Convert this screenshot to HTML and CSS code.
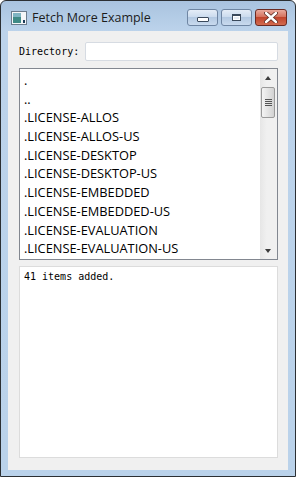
FILE: index.html
```html
<!DOCTYPE html>
<html lang="en">
<head>
  <meta charset="UTF-8" />
  <title>Fetch More Example</title>
  <link rel="stylesheet" href="styles.css">
</head>
<body>
  <div class="window">
    <div class="titlebar">
      <svg class="app-icon" width="16" height="14" viewBox="0 0 16 14">
        <rect x="0.5" y="0.5" width="15" height="13" fill="#f4f6f8" stroke="#6b7b8c"/>
        <rect x="2" y="2" width="8" height="10" fill="#3f8a86"/>
        <rect x="2" y="2" width="8" height="4" fill="#7fb4c2"/>
        <rect x="12" y="9" width="2" height="3" fill="#1d3b5a"/>
      </svg>
      <span class="title">Fetch More Example</span>
      <div class="caption-btns">
        <div class="cbtn"><span class="min-glyph"></span></div>
        <div class="cbtn"><span class="max-glyph"></span></div>
        <div class="cbtn close">
          <svg width="14" height="11" viewBox="0 0 14 11">
            <path d="M2 1 L12 10 M12 1 L2 10" stroke="#5a2a22" stroke-width="4" stroke-linecap="round"/>
            <path d="M2 1 L12 10 M12 1 L2 10" stroke="#fff" stroke-width="2.4" stroke-linecap="round"/>
          </svg>
        </div>
      </div>
    </div>
    <div class="client">
      <div class="dir-row">
        <label class="dir-label">Directory:</label>
        <div class="dir-input"></div>
      </div>
      <div class="listbox">
        <ul class="items">
          <li>.</li>
          <li>..</li>
          <li>.LICENSE-ALLOS</li>
          <li>.LICENSE-ALLOS-US</li>
          <li>.LICENSE-DESKTOP</li>
          <li>.LICENSE-DESKTOP-US</li>
          <li>.LICENSE-EMBEDDED</li>
          <li>.LICENSE-EMBEDDED-US</li>
          <li>.LICENSE-EVALUATION</li>
          <li>.LICENSE-EVALUATION-US</li>
        </ul>
        <div class="scrollbar">
          <div class="arrow up"></div>
          <div class="thumb">
            <span></span><span></span><span></span><span></span>
          </div>
          <div class="track"></div>
          <div class="arrow down"></div>
        </div>
      </div>
      <div class="log">41 items added.</div>
    </div>
  </div>
</body>
</html>
```

FILE: styles.css
```css
body {
  margin: 0;
  background: #ffffff;
}
.window {
  width: 296px;
  height: 477px;
  box-sizing: border-box;
  border: 1px solid #2b2f33;
  border-radius: 6px 6px 0 0;
  background: linear-gradient(to bottom, #a9c3df 0px, #bcd3eb 30px, #bad2ea 100%);
  padding: 0 7px 6px 7px;
  display: flex;
  flex-direction: column;
}
.titlebar {
  height: 30px;
  display: flex;
  align-items: center;
  flex-shrink: 0;
}
.app-icon {
  margin-left: 3px;
  margin-top: 3px;
}
.title {
  margin-left: 5px;
  margin-top: 3px;
  font-family: "Open Sans", "Noto Sans", sans-serif;
  font-size: 12.5px;
  color: #1c1c1c;
}
.caption-btns {
  margin-left: auto;
  margin-right: 1px;
  margin-top: 2px;
  display: flex;
  gap: 3px;
}
.cbtn {
  width: 29px;
  height: 15px;
  border: 1px solid #6f86a3;
  border-radius: 3px;
  background: linear-gradient(to bottom, #e4edf7 0%, #ccdcee 45%, #b3c9e2 50%, #c9daee 100%);
  display: flex;
  align-items: center;
  justify-content: center;
}
.cbtn.close {
  width: 30px;
  border-color: #6b2a22;
  background: linear-gradient(to bottom, #e9a99c 0%, #d5735f 45%, #c1452d 50%, #d26b50 100%);
}
.min-glyph {
  width: 10px;
  height: 3px;
  margin-top: 5px;
  border: 1px solid #3b4a5c;
  background: #fff;
  border-radius: 1px;
}
.max-glyph {
  width: 7px;
  height: 4px;
  border: 1px solid #3b4a5c;
  border-top-width: 2px;
  background: #e8eef5;
  box-shadow: inset 0 0 0 1px #fff;
}
.client {
  flex: 1;
  background: #f0f0f0;
  padding: 11px 10px 12px 11px;
  display: flex;
  flex-direction: column;
  min-height: 0;
}
.dir-row {
  display: flex;
  align-items: center;
  height: 19px;
}
.dir-label {
  width: 66px;
  font-family: "DejaVu Sans Mono", monospace;
  font-size: 10px;
  color: #000;
}
.dir-input {
  flex: 1;
  height: 17px;
  background: #fff;
  border: 1px solid #d6dbe2;
  border-radius: 2px;
}
.listbox {
  margin-top: 7px;
  height: 190px;
  border: 1px solid #828790;
  background: #fff;
  display: flex;
  flex-shrink: 0;
}
.items {
  flex: 1;
  list-style: none;
  margin: 0;
  padding: 2px 0 0 4px;
  overflow: hidden;
  font-family: "Open Sans", "Noto Sans", sans-serif;
  font-size: 12.8px;
  color: #000;
}
.items li {
  height: 18.7px;
  line-height: 18.7px;
  white-space: nowrap;
}
.scrollbar {
  width: 17px;
  display: flex;
  flex-direction: column;
  background: linear-gradient(to right, #e6e6e6, #f0f0f0 40%, #f0f0f0);
}
.arrow {
  height: 17px;
  position: relative;
}
.arrow::after {
  content: "";
  position: absolute;
  left: 5px;
  width: 0;
  height: 0;
  border-left: 3.5px solid transparent;
  border-right: 3.5px solid transparent;
}
.arrow.up::after {
  top: 7px;
  border-bottom: 4px solid #3c3c3c;
}
.arrow.down::after {
  top: 7px;
  border-top: 4px solid #3c3c3c;
}
.thumb {
  height: 29px;
  margin: 1px 2px 0 1px;
  border: 1px solid #9a9a9a;
  border-radius: 2px;
  background: linear-gradient(to right, #f4f4f4, #e0e0e0 60%, #d2d2d2);
  display: flex;
  flex-direction: column;
  align-items: center;
  justify-content: center;
  gap: 1px;
}
.thumb span {
  width: 7px;
  height: 1px;
  background: #555;
}
.track {
  flex: 1;
}
.log {
  margin-top: 6px;
  flex: 1;
  background: #fff;
  border: 1px solid #dcdcdc;
  padding: 4px 4px;
  font-family: "DejaVu Sans Mono", monospace;
  font-size: 10px;
  color: #000;
}
```
